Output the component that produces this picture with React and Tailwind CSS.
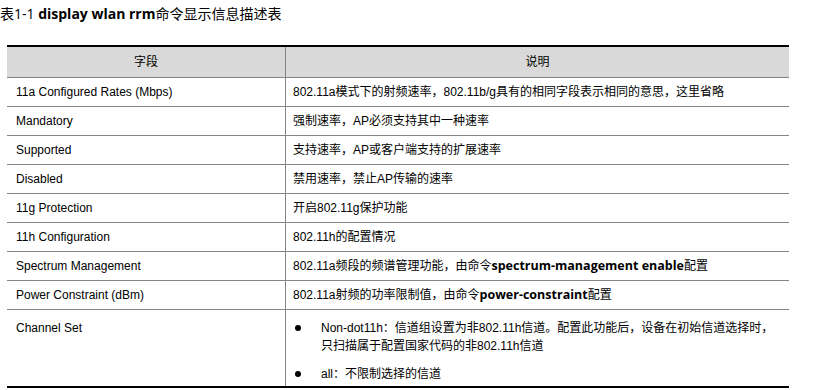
import React from 'react'

const body = { fontFamily: '"Liberation Sans", Arial, "Noto Sans CJK SC", sans-serif' }
const heavy = { fontFamily: '"Open Sans", "Noto Sans CJK SC", sans-serif' }

const rows = [
  { name: '11a Configured Rates (Mbps)', desc: '802.11a模式下的射频速率，802.11b/g具有的相同字段表示相同的意思，这里省略' },
  { name: 'Mandatory', desc: '强制速率，AP必须支持其中一种速率' },
  { name: 'Supported', desc: '支持速率，AP或客户端支持的扩展速率' },
  { name: 'Disabled', desc: '禁用速率，禁止AP传输的速率' },
  { name: '11g Protection', desc: '开启802.11g保护功能' },
  { name: '11h Configuration', desc: '802.11h的配置情况' },
  { name: 'Spectrum Management', desc: <>802.11a频段的频谱管理功能，由命令<b className="font-bold text-[12.5px]" style={heavy}>spectrum-management enable</b>配置</> },
  { name: 'Power Constraint (dBm)', desc: <>802.11a射频的功率限制值，由命令<b className="font-bold text-[12.5px]" style={heavy}>power-constraint</b>配置</> },
]

export default function App() {
  return (
    <div className="w-[838px] h-[390px] bg-white overflow-hidden text-black" style={body}>
      {/* caption */}
      <div className="pt-[5px] text-[14px] leading-[18px]" style={heavy}>
        表1-1 <b className="font-bold">display wlan rrm</b>命令显示信息描述表
      </div>

      <div className="ml-[7px] mt-[22px] w-[782px] border-t-2 border-b-2 border-black text-[12px]">
        <div className="flex h-[31px] bg-[#d9d9d9] border-b border-[#858585]">
          <div className="w-[279px] flex items-center justify-center border-r border-[#858585]">字段</div>
          <div className="flex-1 flex items-center justify-center">说明</div>
        </div>

        {rows.map(r => (
          <div key={r.name} className="flex h-[29px] border-b border-[#858585]">
            <div className="w-[279px] flex items-center pl-[9px] border-r border-[#858585]">{r.name}</div>
            <div className="flex-1 flex items-center pl-[7px]">{r.desc}</div>
          </div>
        ))}

        {/* Channel Set */}
        <div className="flex h-[76px]">
          <div className="w-[279px] pl-[9px] pt-[9px] leading-[18px] border-r border-[#858585]">Channel Set</div>
          <div className="flex-1 pt-[9px] pl-[9px] leading-[18px]">
            <div className="flex">
              <span className="w-[6px] h-[6px] mt-[6px] rounded-full bg-black shrink-0" />
              <span className="ml-[20px]">Non-dot11h：信道组设置为非802.11h信道。配置此功能后，设备在初始信道选择时，<br />只扫描属于配置国家代码的非802.11h信道</span>
            </div>
            <div className="flex mt-[10px]">
              <span className="w-[6px] h-[6px] mt-[6px] rounded-full bg-black shrink-0" />
              <span className="ml-[20px]">all：不限制选择的信道</span>
            </div>
          </div>
        </div>
      </div>
    </div>
  )
}
